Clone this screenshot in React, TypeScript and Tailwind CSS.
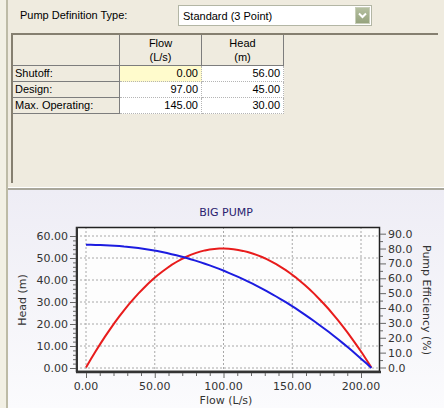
import React from 'react'

const ui = { fontFamily: '"Liberation Sans", Arial, sans-serif' }
const chartFont = '"DejaVu Sans", Verdana, sans-serif'

// chart mapping (page coordinates)
const toX = (q: number) => 86 + q * 1.375
const toYL = (h: number) => 368 - h * 2.2
const toYR = (e: number) => 367.5 - e * 1.487

// 3-point head curve H = A - B*Q^C
const A = 56
const C = Math.log(26 / 11) / Math.log(145 / 97)
const B = 11 / Math.pow(97, C)
const QMAX = Math.pow(A / B, 1 / C)
const QBEP = 99

const eff = (q: number) => {
  const span = q <= QBEP ? QBEP : QMAX - QBEP
  const t = (q - QBEP) / span
  return 80 * (1 - t * t)
}

const headPts = Array.from({ length: 61 }, (_, i) => {
  const q = (QMAX * i) / 60
  return `${toX(q).toFixed(1)},${toYL(A - B * Math.pow(q, C)).toFixed(1)}`
}).join(' ')

const effPts = Array.from({ length: 61 }, (_, i) => {
  const q = (QMAX * i) / 60
  return `${toX(q).toFixed(1)},${toYR(eff(q)).toFixed(1)}`
}).join(' ')

const rows = [
  { name: 'Shutoff:', flow: '0.00', head: '56.00' },
  { name: 'Design:', flow: '97.00', head: '45.00' },
  { name: 'Max. Operating:', flow: '145.00', head: '30.00' },
]

function Chart() {
  const leftVals = [0, 10, 20, 30, 40, 50, 60]
  const rightVals = [0, 10, 20, 30, 40, 50, 60, 70, 80, 90]
  const xVals = [0, 50, 100, 150, 200]
  const txt = '#333'
  return (
    <svg width={436} height={218} viewBox="8 190 436 218" className="block">
      <text x={226} y={216} textAnchor="middle" fontSize={11} fontFamily={chartFont} fill="#2b1d70">
        BIG PUMP
      </text>

      {/* plot area */}
      <rect x={76} y={227} width={304} height={145} fill="#fdfdfd" />

      {/* grid */}
      {leftVals.map((v) => (
        <line key={`gh${v}`} x1={76} x2={380} y1={toYL(v)} y2={toYL(v)} stroke="#a8a8a8" strokeWidth={1} strokeDasharray="2 2" />
      ))}
      {xVals.map((v) => (
        <line key={`gv${v}`} x1={toX(v)} x2={toX(v)} y1={227} y2={372} stroke="#a8a8a8" strokeWidth={1} strokeDasharray="2 2" />
      ))}

      {/* curves */}
      <polyline points={effPts} fill="none" stroke="#e81c1c" strokeWidth={2} />
      <polyline points={headPts} fill="none" stroke="#1c1ce0" strokeWidth={2} />

      {/* frame */}
      <rect x={76.5} y={227.5} width={303} height={144} fill="none" stroke="#222" strokeWidth={1.5} />
      <line x1={77} x2={77} y1={227} y2={373} stroke="#333" strokeWidth={2} />
      <line x1={76} x2={381} y1={372} y2={372} stroke="#333" strokeWidth={2.5} />

      {/* left axis ticks */}
      {Array.from({ length: 31 }, (_, i) => i * 2).map((v) => (
        <line key={`lt${v}`} x1={v % 10 === 0 ? 70 : 73} x2={76} y1={toYL(v) + 0.5} y2={toYL(v) + 0.5} stroke="#666" strokeWidth={1} />
      ))}
      {leftVals.map((v) => (
        <text key={`ll${v}`} x={68} y={toYL(v) + 4} textAnchor="end" fontSize={11} fontFamily={chartFont} fill={txt}>
          {v.toFixed(2)}
        </text>
      ))}

      {/* right axis ticks */}
      {Array.from({ length: 19 }, (_, i) => i * 5).map((v) => (
        <line key={`rt${v}`} x1={380} x2={v % 10 === 0 ? 386 : 383} y1={toYR(v) + 0.5} y2={toYR(v) + 0.5} stroke="#666" strokeWidth={1} />
      ))}
      {rightVals.map((v) => (
        <text key={`rl${v}`} x={388} y={toYR(v) + 4} fontSize={11} fontFamily={chartFont} fill={txt}>
          {v.toFixed(1)}
        </text>
      ))}

      {/* bottom axis ticks */}
      {Array.from({ length: 21 }, (_, i) => i * 10).map((v) => (
        <line key={`bt${v}`} x1={toX(v) + 0.5} x2={toX(v) + 0.5} y1={373} y2={v % 50 === 0 ? 378 : 376} stroke="#666" strokeWidth={1} />
      ))}
      {xVals.map((v) => (
        <text key={`bl${v}`} x={toX(v)} y={390} textAnchor="middle" fontSize={11} fontFamily={chartFont} fill={txt}>
          {v.toFixed(2)}
        </text>
      ))}

      <text x={226} y={404} textAnchor="middle" fontSize={11} fontFamily={chartFont} fill={txt}>
        Flow (L/s)
      </text>
      <text x={0} y={0} transform="translate(26 300) rotate(-90)" textAnchor="middle" fontSize={11} fontFamily={chartFont} fill={txt}>
        Head (m)
      </text>
      <text x={0} y={0} transform="translate(423 300) rotate(90)" textAnchor="middle" fontSize={11} fontFamily={chartFont} fill={txt}>
        Pump Efficiency (%)
      </text>
    </svg>
  )
}

export default function App() {
  return (
    <div className="flex w-[444px] h-[408px] overflow-hidden text-[11px] text-black" style={ui}>
      {/* left frame strip */}
      <div className="w-[8px] shrink-0 bg-[#f2f0e4] border-r-2 border-[#bdbba6]" />

      <div className="flex flex-col flex-1">
        {/* top panel */}
        <div className="h-[190px] shrink-0 bg-[#efebdf] flex flex-col border-b-2 border-[#a9a79b]">
          <div className="h-[33px] shrink-0 flex items-start pt-[5px]">
            <div className="w-[170px] pl-[12px] pt-[3px] leading-[14px]">Pump Definition Type:</div>
            <div className="w-[194px] h-[21px] bg-white border border-[#b3b6a5] flex items-center justify-between pl-[4px] pr-[1px]">
              <span className="leading-[14px]">Standard (3 Point)</span>
              <div className="w-[15px] h-[17px] bg-linear-to-b from-[#b4bf9f] to-[#96a37e] border border-[#c8ceb9] flex items-center justify-center">
                <svg width="9" height="7" viewBox="0 0 9 7">
                  <path d="M1 1.5 L4.5 5 L8 1.5" fill="none" stroke="#fff" strokeWidth={2} />
                </svg>
              </div>
            </div>
          </div>

          <div className="ml-[3px] mr-[6px] h-[150px] border-t-2 border-l-2 border-[#857f70]">
            <div className="grid grid-cols-[107px_82px_82px] w-fit">
              <div className="h-[31px] border-r border-b border-[#7d7d7d]" />
              <div className="h-[31px] border-r border-b border-[#7d7d7d] flex flex-col items-center justify-center leading-[14px]">
                <span>Flow</span>
                <span>(L/s)</span>
              </div>
              <div className="h-[31px] border-r border-b border-[#7d7d7d] flex flex-col items-center justify-center leading-[14px]">
                <span>Head</span>
                <span>(m)</span>
              </div>
              {rows.map((r, i) => (
                <React.Fragment key={r.name}>
                  <div className="h-[16px] border-r border-b border-[#7d7d7d] pl-[2px] leading-[15px]">{r.name}</div>
                  <div
                    className={`h-[16px] border-r border-b border-dotted border-[#b5b5b5] text-right pr-[3px] leading-[15px] ${
                      i === 0 ? 'bg-[#fffbcc]' : 'bg-white'
                    }`}
                  >
                    {r.flow}
                  </div>
                  <div className="h-[16px] border-r border-b border-dotted border-[#b5b5b5] text-right pr-[3px] leading-[15px] bg-white">
                    {r.head}
                  </div>
                </React.Fragment>
              ))}
            </div>
          </div>
          <div className="mt-auto h-[3px] border-b border-white" />
        </div>

        {/* chart panel */}
        <div className="flex-1 bg-linear-to-b from-[#eeedf5] to-[#fbfbfd]">
          <Chart />
        </div>
      </div>
    </div>
  )
}
